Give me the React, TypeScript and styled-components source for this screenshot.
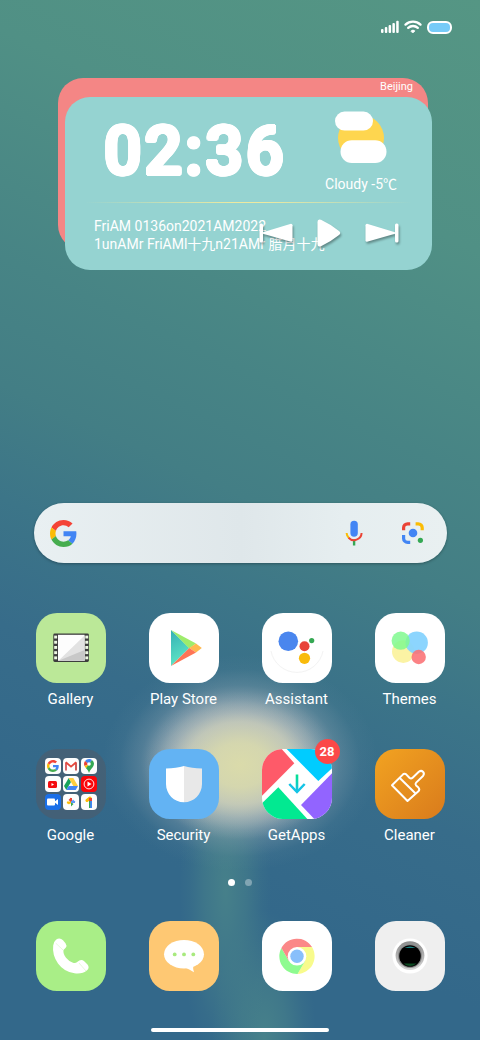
import React from 'react';
import styled, { createGlobalStyle } from 'styled-components';

const GlobalStyle = createGlobalStyle`
  *, *::before, *::after { box-sizing: border-box; }
  body {
    margin: 0;
    font-family: Roboto, "Noto Sans CJK SC", sans-serif;
    color: #fff;
  }
  button {
    border: 0;
    padding: 0;
    background: none;
    font: inherit;
    color: inherit;
    cursor: pointer;
  }
  svg { display: block; }
`;

const Screen = styled.main`
  min-height: 100vh;
  display: flex;
  flex-direction: column;
  overflow: hidden;
  background:
    radial-gradient(ellipse 96px 74px at 50% calc(100% - 275px), rgba(222, 222, 168, 0.9) 0%, rgba(222, 222, 170, 0.78) 30%, rgba(220, 220, 176, 0.48) 52%, rgba(214, 214, 190, 0.2) 72%, rgba(205, 208, 200, 0.05) 88%, rgba(200, 205, 200, 0) 100%),
    radial-gradient(ellipse 138px 108px at 50% calc(100% - 277px), rgba(196, 198, 196, 0.9) 0%, rgba(194, 197, 197, 0.85) 38%, rgba(182, 190, 194, 0.6) 55%, rgba(160, 178, 186, 0.26) 72%, rgba(130, 162, 174, 0.07) 87%, rgba(110, 150, 160, 0) 100%),
    radial-gradient(ellipse 46px 190px at 47% calc(100% - 150px), rgba(78, 138, 138, 0.7) 0%, rgba(78, 138, 138, 0.42) 45%, rgba(78, 138, 138, 0.12) 78%, rgba(78, 138, 138, 0) 100%),
    radial-gradient(ellipse 52px 130px at 55% 100%, rgba(78, 138, 138, 0.75) 0%, rgba(78, 138, 138, 0.46) 45%, rgba(78, 138, 138, 0.14) 78%, rgba(78, 138, 138, 0) 100%),
    linear-gradient(205deg, #559684 0%, #509085 20%, #478485 38%, #437e85 48%, #3c7588 57%, #376c8a 67%, #33688a 80%, #33688a 100%);
`;

const StatusBar = styled.header`
  display: flex;
  justify-content: flex-end;
  align-items: center;
  gap: 5px;
  padding: 20px 28px 0;
  height: 34px;
`;

const Battery = styled.span`
  width: 25px;
  height: 13px;
  border: 2px solid #fff;
  border-radius: 6px;
  background: #76cbf8;
`;

const Widget = styled.section`
  display: grid;
  margin: 44px 48px 32px 58px;
`;

const BackCard = styled.div`
  grid-area: 1 / 1;
  margin: 0 4px 20px 0;
  padding: 0 15px;
  border-radius: 25px;
  background: #f48685;
  font-size: 11px;
  line-height: 17px;
  text-align: right;
`;

const FrontCard = styled.div`
  grid-area: 1 / 1;
  margin: 19px 0 0 7px;
  border-radius: 25px;
  background: #95d3d1;
`;

const Overview = styled.div`
  display: flex;
  justify-content: space-between;
  align-items: flex-start;
  height: 105px;
  padding: 14px 35px 0 39px;
`;

const Clock = styled.time`
  display: flex;
  gap: 3px;
  font-weight: 500;
  font-size: 66px;
  line-height: 82px;
  text-shadow:
    2px 0 #fff, 2px 1px #fff, 1px 2px #fff, 0 2px #fff,
    -1px 2px #fff, -2px 1px #fff, -2px 0 #fff, -2px -1px #fff,
    -1px -2px #fff, 0 -2px #fff, 1px -2px #fff, 2px -1px #fff;
`;

const Weather = styled.div`
  display: flex;
  flex-direction: column;
  align-items: center;
  gap: 11px;
  font-size: 14px;
  line-height: 20px;
`;

const Divider = styled.hr`
  height: 1px;
  margin: 0 20px;
  border: 0;
  background: linear-gradient(90deg, transparent, #ece9a0 45%, #ece9a0 55%, transparent);
`;

const InfoRow = styled.div`
  display: grid;
  align-items: start;
  padding: 14px 33px 17px 29px;
`;

const DateText = styled.p`
  grid-area: 1 / 1;
  margin: 0;
  font-size: 14px;
  line-height: 18px;
  white-space: nowrap;
`;

const MediaControls = styled.div`
  grid-area: 1 / 1;
  justify-self: end;
  display: flex;
  align-items: center;
  gap: 24px;
  padding-top: 2px;
  filter: drop-shadow(1px 2px 1px rgba(0, 0, 0, 0.35));
`;

const BottomArea = styled.div`
  margin-top: auto;
`;

const SearchBar = styled.form`
  display: flex;
  align-items: center;
  height: 60px;
  margin: 0 33px 0 34px;
  padding: 0 22px 0 16px;
  border-radius: 30px;
  background: linear-gradient(90deg, #e9f0f2 0%, #dfe7ea 50%, #e6eef0 75%, #e9f0f1 100%);
  box-shadow: 0 1px 3px rgba(0, 0, 0, 0.3);
`;

const SearchInput = styled.input`
  flex: 1;
  min-width: 0;
  height: 40px;
  margin: 0 12px;
  border: 0;
  outline: 0;
  background: transparent;
  font-family: inherit;
  font-size: 16px;
  color: #333;
`;

const SearchActions = styled.div`
  display: flex;
  align-items: center;
  gap: 37px;
`;

const AppGrid = styled.nav`
  display: grid;
  grid-template-columns: repeat(4, 1fr);
  row-gap: 40px;
  margin: 50px 14px 0;
`;

const AppButton = styled.button`
  display: flex;
  flex-direction: column;
  align-items: center;
  gap: 6px;
  font-size: 15px;
  line-height: 20px;
`;

const Tile = styled.span<{ $bg: string }>`
  position: relative;
  display: grid;
  place-items: center;
  width: 70px;
  height: 70px;
  border-radius: 21px;
  background: ${(p) => p.$bg};
`;

const Badge = styled.span`
  position: absolute;
  top: -10px;
  right: -8px;
  width: 25px;
  height: 25px;
  border-radius: 50%;
  background: #fb4848;
  font-size: 13px;
  font-weight: 700;
  line-height: 25px;
  text-align: center;
`;

const FolderGrid = styled.span`
  display: grid;
  grid-template-columns: repeat(3, 16px);
  gap: 2px;
`;

const MiniTile = styled.span<{ $bg?: string }>`
  display: grid;
  place-items: center;
  height: 16px;
  border-radius: 4px;
  background: ${(p) => p.$bg ?? '#fdfdfd'};
`;

const Pager = styled.div`
  display: flex;
  justify-content: center;
  gap: 10px;
  margin-top: 34px;
`;

const Dot = styled.span<{ $active?: boolean }>`
  width: 7px;
  height: 7px;
  border-radius: 50%;
  background: ${(p) => (p.$active ? '#fff' : 'rgba(255, 255, 255, 0.35)')};
`;

const Dock = styled.nav`
  display: grid;
  grid-template-columns: repeat(4, 1fr);
  margin: 35px 14px 0;
`;

const HomeBar = styled.div`
  width: 37%;
  height: 4px;
  margin: 37px auto 8px;
  border-radius: 2px;
  background: #fff;
`;

const GoogleG = ({ size }: { size: number }) => (
  <svg width={size} height={size} viewBox="0 0 48 48" aria-hidden="true">
    <path fill="#f44336" d="M24 9.5c3.54 0 6.71 1.22 9.21 3.6l6.85-6.85C35.9 2.38 30.47 0 24 0 14.62 0 6.51 5.38 2.56 13.22l7.98 6.19C12.43 13.72 17.74 9.5 24 9.5z" />
    <path fill="#4285f4" d="M46.98 24.55c0-1.57-.15-3.09-.38-4.55H24v9.02h12.94c-.58 2.96-2.26 5.48-4.78 7.18l7.73 6c4.51-4.18 7.09-10.36 7.09-17.65z" />
    <path fill="#fbbc05" d="M10.53 28.59c-.48-1.45-.76-2.99-.76-4.59s.27-3.14.76-4.59l-7.98-6.19C.92 16.46 0 20.12 0 24c0 3.88.92 7.54 2.56 10.78l7.97-6.19z" />
    <path fill="#46ad4f" d="M24 48c6.48 0 11.93-2.13 15.89-5.81l-7.73-6c-2.15 1.45-4.92 2.3-8.16 2.3-6.26 0-11.57-4.22-13.47-9.91l-7.98 6.19C6.51 42.62 14.62 48 24 48z" />
  </svg>
);

const Drawing = ({ children }: { children: React.ReactNode }) => (
  <svg width="70" height="70" viewBox="0 0 70 70" aria-hidden="true">
    {children}
  </svg>
);

const GalleryIcon = () => (
  <Drawing>
    <rect x="17.3" y="20.6" width="35.6" height="28.4" rx="1.4" fill="#3d3d3d" />
    <rect x="22" y="21.8" width="26.6" height="26" fill="#fdfdfd" />
    <path d="M48.6 22.6V47.8H22.4z" fill="#e2e2e2" />
    <path d="M48.6 37V47.8H22.4z" fill="#c8c8c8" />
    {[22.6, 27.8, 33, 38.2, 43.4].map((y) => (
      <React.Fragment key={y}>
        <rect x="18.2" y={y} width="2.9" height="2.9" fill="#eef8e4" />
        <rect x="49.3" y={y} width="2.9" height="2.9" fill="#eef8e4" />
      </React.Fragment>
    ))}
  </Drawing>
);

const PlayStoreIcon = () => (
  <Drawing>
    <defs>
      <linearGradient id="playTeal" x1="0" y1="0" x2="0.3" y2="1">
        <stop offset="0" stopColor="#35b0b4" />
        <stop offset="1" stopColor="#5ee6c6" />
      </linearGradient>
    </defs>
    <path d="M22 17v36l18.3-18z" fill="url(#playTeal)" />
    <path d="M22 17l25 13.5-6.7 5z" fill="#9eec6c" />
    <path d="M47 30.5l5.8 4.6-5.8 4.4-6.7-4.5z" fill="#ffb950" />
    <path d="M22 53l25-13.5-6.7-4.5z" fill="#ff7556" />
  </Drawing>
);

const AssistantIcon = () => (
  <Drawing>
    <path d="M9 38a26.5 26.5 0 0 0 52 0" fill="none" stroke="#f3f3f3" strokeWidth="1" />
    <circle cx="26.3" cy="28.3" r="9.8" fill="#4a86ee" />
    <circle cx="42.5" cy="33.3" r="5" fill="#e8453a" />
    <circle cx="49.7" cy="27.6" r="2.6" fill="#35a853" />
    <circle cx="42.5" cy="45.3" r="5.6" fill="#f9bb0b" />
  </Drawing>
);

const ThemesIcon = () => (
  <Drawing>
    <circle cx="28.3" cy="38.6" r="11.3" fill="#fbf3a4" />
    <circle cx="41.7" cy="29.7" r="11.2" fill="#86d3fe" fillOpacity="0.95" />
    <circle cx="25.7" cy="27.7" r="9.1" fill="#80f98f" fillOpacity="0.85" />
    <circle cx="43.7" cy="44" r="7.2" fill="#fb7174" fillOpacity="0.88" />
  </Drawing>
);

const SecurityIcon = () => (
  <Drawing>
    <path d="M35 17c-5 1.5-11 2.3-18 2.4V35c0 10 8 18.3 18 18.3z" fill="#fff" />
    <path d="M35 17c5 1.5 11 2.3 18 2.4V35c0 10-8 18.3-18 18.3z" fill="#e8e8e8" />
  </Drawing>
);

const GetAppsIcon = () => (
  <Drawing>
    <defs>
      <clipPath id="getAppsClip"><rect width="70" height="70" rx="21" /></clipPath>
      <linearGradient id="getAppsArrow" x1="0" y1="0" x2="0" y2="1">
        <stop offset="0" stopColor="#06e28e" />
        <stop offset="1" stopColor="#12c2e8" />
      </linearGradient>
    </defs>
    <g clipPath="url(#getAppsClip)">
      <path d="M0 0h19.7l12.6 14.3L0 46.7z" fill="#fe5a69" />
      <path d="M24.7 0H70v19.3L56.3 32z" fill="#00ccff" />
      <path d="M70 24.3L39 56l13.3 14H70z" fill="#9264ff" />
      <path d="M16.3 38.3L45.3 70H0V54.3z" fill="#02e991" />
      <path d="M33.7 25.5h2.6v17h-2.6z" fill="url(#getAppsArrow)" />
      <path d="M27.3 35l7.7 8 7.7-8" fill="none" stroke="#14c4e6" strokeWidth="2.5" />
    </g>
  </Drawing>
);

const CleanerIcon = () => (
  <Drawing>
    <g fill="none" stroke="#fff" strokeWidth="2" strokeLinejoin="round">
      <path d="M17 36.3L27.8 25.6q1.8-1.6 3.6 0l3 3.2q1.6 1.5 3.2 0l6.2-6q2.4-1.9 4.2 0t0 4.2l-6.9 6.6q-1.3 1.5 0 3l2.3 2q1.7 1.8 0 3.6L32.5 52z" />
      <path d="M24.5 28.8L40.3 44.3" />
    </g>
  </Drawing>
);

const PhoneIcon = () => (
  <Drawing>
    <path d="M20 18.7q3.8-2.8 7 .6l2.5 2.9q1.8 2.4.2 4.5l-2.2 2.3q-.6 3.8 2.5 7.8 3 3.8 7 5 2.6.7 4.5-1.1 3.5-3.2 7-.3l3 3q2.4 3.2-.4 5.8-4.6 4-12.6 3-10.5-1.5-16.5-9.8Q16 34 17.2 24.5q.5-4 2.8-5.8z" fill="#fff" />
    <path d="M19.800 22.200l7.400 7M43 42l7 8" stroke="#a9ec88" strokeWidth="0.300" />
  </Drawing>
);

const MessagesIcon = () => (
  <Drawing>
    <ellipse cx="35" cy="33.2" rx="20" ry="14.3" fill="#fff" />
    <path d="M36 46.5q4 1.500 9 4.700-1.200-3.500-.8-7z" fill="#fff" />
    {[25.7, 35, 44.3].map((x) => (
      <circle key={x} cx={x} cy="33.4" r="1.9" fill="#a8ea7e" />
    ))}
  </Drawing>
);

const ChromeIcon = () => (
  <Drawing>
    <g transform="translate(35 35.3)">
      <path d="M0-9.3H15A17.7 17.7 0 0 1 .55 17.65L8.05 4.65z" fill="#f8fb8c" />
      <path d="M8.05 4.65L.55 17.65A17.7 17.7 0 0 1-15.6-8.35L-8.05 4.65z" fill="#8efb90" />
      <path d="M-8.05 4.65L-15.6-8.35A17.7 17.7 0 0 1 15-9.3H0z" fill="#fb8888" />
      <circle r="9.3" fill="#fff" />
      <circle r="6.7" fill="#88bffb" />
    </g>
  </Drawing>
);

const CameraIcon = () => (
  <Drawing>
    <defs>
      <linearGradient id="lensRing" x1="0" y1="0" x2="0" y2="1">
        <stop offset="0" stopColor="#8c8c8c" />
        <stop offset="1" stopColor="#d6d6d6" />
      </linearGradient>
    </defs>
    <circle cx="35" cy="35" r="17.6" fill="#fff" />
    <circle cx="35" cy="34.6" r="14.4" fill="url(#lensRing)" />
    <circle cx="35" cy="35" r="12" fill="#8a8a8a" />
    <circle cx="35" cy="35" r="10.8" fill="#000" />
    <path d="M29.5 27q5.5-3 11 0z" fill="#167f7f" />
    <path d="M28.5 42.5q6.5 5 13 0z" fill="#0c4a22" />
  </Drawing>
);

const GoogleFolder = () => (
  <FolderGrid>
    <MiniTile><GoogleG size={12} /></MiniTile>
    <MiniTile>
      <svg width="12" height="10" viewBox="0 0 12 10" fill="none" strokeWidth="1.8">
        <path d="M1 9.5V1.5" stroke="#d8555a" />
        <path d="M11 9.5V1.5" stroke="#c94a48" />
        <path d="M.8 1.2L6 5.6l5.2-4.4" stroke="#e5463b" />
      </svg>
    </MiniTile>
    <MiniTile>
      <svg width="10" height="14" viewBox="0 0 10 14">
        <path d="M5 0a5 5 0 0 0-4 2l4 3.4L8 .9A5 5 0 0 0 5 0z" fill="#4285f4" />
        <path d="M1 2a5 5 0 0 0-.5 5L5 5.2z" fill="#ea4335" />
        <path d="M.5 7L2 9.2 9 2 5 5.2z" fill="#fbbc04" />
        <path d="M8 .9a5 5 0 0 1 1.4 6C8.5 9 6 10.5 5 14c-.6-2.3-1.7-3.5-3-4.8z" fill="#34a853" />
        <circle cx="5" cy="5" r="1.8" fill="#fff" />
      </svg>
    </MiniTile>
    <MiniTile>
      <svg width="9" height="7" viewBox="0 0 9 7">
        <rect width="9" height="7" rx="1.5" fill="#f40c10" />
        <path d="M3.5 2v3L6 3.5z" fill="#fff" />
      </svg>
    </MiniTile>
    <MiniTile>
      <svg width="14" height="12" viewBox="0 0 14 12">
        <path d="M4.7 0L0 8l2.3 4L7 4z" fill="#17a45c" />
        <path d="M4.7 0h4.6L14 8H9.3z" fill="#ffcf3f" />
        <path d="M4.6 8H14l-2.3 4H2.3z" fill="#4386f5" />
      </svg>
    </MiniTile>
    <MiniTile $bg="#fb0509">
      <svg width="12" height="12" viewBox="0 0 12 12">
        <circle cx="6" cy="6" r="4.9" fill="none" stroke="#fff" strokeWidth="0.9" />
        <path d="M4.5 3.5v5L8.5 6z" fill="#fff" />
      </svg>
    </MiniTile>
    <MiniTile $bg="#1a6fe8">
      <svg width="11" height="8" viewBox="0 0 11 8">
        <rect y="0.5" width="8" height="7" rx="1" fill="#fff" />
        <path d="M7 4l4-3v6z" fill="#fff" />
      </svg>
    </MiniTile>
    <MiniTile>
      <svg width="10" height="10" viewBox="0 0 10 10">
        <path d="M5 .5V5L2.5 3z" fill="#ea4335" />
        <path d="M9.5 5H5l2-2.5z" fill="#5f97f6" />
        <path d="M5 9.5V5l2.500 2z" fill="#34a853" />
        <path d="M.5 5H5L3 7.5z" fill="#fbbc04" />
        <path d="M4 1h2v4H4z" fill="#ea4335" />
        <path d="M1 4.5h4v2H1z" fill="#fbbc04" />
        <path d="M5 4h4v2H5z" fill="#5f97f6" />
      </svg>
    </MiniTile>
    <MiniTile>
      <svg width="8" height="12" viewBox="0 0 8 12">
        <path d="M2 4.5L5 2" stroke="#fbbc04" strokeWidth="3" strokeLinecap="round" />
        <path d="M4 2h3v5H4z" fill="#ea4335" />
        <path d="M4 5h3v7H4z" fill="#4285f4" />
        <path d="M4 5h1.200v7H4z" fill="#34a853" />
      </svg>
    </MiniTile>
  </FolderGrid>
);

type App = { name: string; bg: string; icon: React.ReactNode; badge?: number };

const apps: App[] = [
  { name: 'Gallery', bg: '#bbe898', icon: <GalleryIcon /> },
  { name: 'Play Store', bg: '#fff', icon: <PlayStoreIcon /> },
  { name: 'Assistant', bg: '#fff', icon: <AssistantIcon /> },
  { name: 'Themes', bg: '#fff', icon: <ThemesIcon /> },
  { name: 'Google', bg: 'rgba(78, 92, 106, 0.6)', icon: <GoogleFolder /> },
  { name: 'Security', bg: '#63b3f3', icon: <SecurityIcon /> },
  { name: 'GetApps', bg: '#fff', icon: <GetAppsIcon />, badge: 28 },
  { name: 'Cleaner', bg: 'linear-gradient(135deg, #f2a321, #d97b1c)', icon: <CleanerIcon /> },
];

const dockApps: App[] = [
  { name: 'Phone', bg: '#a9ee87', icon: <PhoneIcon /> },
  { name: 'Messages', bg: '#fec873', icon: <MessagesIcon /> },
  { name: 'Chrome', bg: '#fff', icon: <ChromeIcon /> },
  { name: 'Camera', bg: '#efefef', icon: <CameraIcon /> },
];

export default function App() {
  return (
    <>
      <GlobalStyle />
      <Screen>
        <StatusBar>
          <svg width="18" height="14" viewBox="0 0 18 14" fill="#fff" aria-hidden="true">
            <rect x="0" y="9" width="2.5" height="4" rx="1" />
            <rect x="3.8" y="7" width="2.5" height="6" rx="1" />
            <rect x="7.6" y="5" width="2.5" height="8" rx="1" />
            <rect x="11.4" y="3" width="2.5" height="10" rx="1" />
            <rect x="15.2" y="0.8" width="2.5" height="12.2" rx="1" />
          </svg>
          <svg width="18" height="14" viewBox="0 0 18 14" fill="none" stroke="#fff" strokeWidth="2.3" strokeLinecap="round" aria-hidden="true">
            <path d="M1.5 4.600a11 11 0 0 1 15 0" />
            <path d="M4.200 7.900a7 7 0 0 1 9.600 0" />
            <path d="M7.200 10.900a2.600 2.600 0 0 1 3.600 0L9 12.700z" fill="#fff" strokeWidth="1" strokeLinejoin="round" />
          </svg>
          <Battery />
        </StatusBar>

        <Widget>
          <BackCard>Beijing</BackCard>
          <FrontCard>
            <Overview>
              <Clock dateTime="02:36">
                <span>0</span>
                <span>2</span>
                <span>:</span>
                <span>3</span>
                <span>6</span>
              </Clock>
              <Weather>
                <svg width="52" height="52" viewBox="0 0 52 52" aria-hidden="true">
                  <circle cx="26" cy="27" r="23" fill="#fed64f" />
                  <rect x="0" y="0.6" width="38" height="19" rx="9.5" fill="#fff" />
                  <rect x="5.5" y="29.3" width="46" height="22.7" rx="11.3" fill="#fff" />
                </svg>
                <span>Cloudy -5℃</span>
              </Weather>
            </Overview>
            <Divider />
            <InfoRow>
              <DateText>
                FriAM 0136on2021AM2022
                <br />
                1unAMr FriAMl十九n21AMr 腊月十九
              </DateText>
              <MediaControls>
                <button type="button" aria-label="Previous">
                  <svg width="34" height="20" viewBox="0 0 34 20" fill="#fff">
                    <rect x="0.5" y="0.5" width="3.5" height="19" rx="1.5" />
                    <path d="M4 9.3L32 .8q1.5 0 1.5 1.5v15q0 1.5-1.5 1.5L4 10.7z" />
                  </svg>
                </button>
                <button type="button" aria-label="Play">
                  <svg width="24" height="28" viewBox="0 0 24 28" fill="#fff">
                    <path d="M.5 3Q.5-.5 4 .8 14 5.5 22 12q2.5 2 0 4Q14 22.5 4 27.2.5 28.5.5 25z" />
                  </svg>
                </button>
                <button type="button" aria-label="Next">
                  <svg width="34" height="20" viewBox="0 0 34 20" fill="#fff">
                    <rect x="30" y="0.5" width="3.5" height="19" rx="1.5" />
                    <path d="M30 9.3L2 .8Q.5.8.5 2.3v15q0 1.5 1.5 1.5L30 10.7z" />
                  </svg>
                </button>
              </MediaControls>
            </InfoRow>
          </FrontCard>
        </Widget>

        <BottomArea>
          <SearchBar role="search" onSubmit={(e) => e.preventDefault()}>
            <GoogleG size={27} />
            <SearchInput type="text" aria-label="Search" />
            <SearchActions>
              <button type="button" aria-label="Voice search">
                <svg width="20" height="26" viewBox="0 0 20 26" fill="none">
                  <rect x="6.4" y="0.8" width="7.4" height="16" rx="3.7" fill="#4285f4" />
                  <path d="M8.9 19.5h2.4v6H8.9z" fill="#34a853" />
                  <path d="M2.6 13a7.5 7.5 0 0 0 2.3 5" stroke="#fbbc04" strokeWidth="2" />
                  <path d="M4.6 17.7a7.5 7.5 0 0 0 13-4.7" stroke="#ea4335" strokeWidth="2" />
                </svg>
              </button>
              <button type="button" aria-label="Lens search">
                <svg width="24" height="24" viewBox="0 0 24 24" fill="none" strokeWidth="3.2">
                  <path d="M2.6 9.2V6.8a4 4 0 0 1 4-4h2.6" stroke="#ea4335" />
                  <path d="M14.6 2.8h2.6a4 4 0 0 1 4 4v2.4" stroke="#fbbc04" />
                  <path d="M2.6 14v3.4a4 4 0 0 0 4 4h2.6" stroke="#4285f4" />
                  <circle cx="12" cy="12" r="4.3" fill="#4285f4" />
                  <circle cx="19.4" cy="19.3" r="2.6" fill="#34a853" />
                </svg>
              </button>
            </SearchActions>
          </SearchBar>

          <AppGrid aria-label="Apps">
            {apps.map((app) => (
              <AppButton type="button" key={app.name}>
                <Tile $bg={app.bg}>
                  {app.icon}
                  {app.badge && <Badge>{app.badge}</Badge>}
                </Tile>
                <span>{app.name}</span>
              </AppButton>
            ))}
          </AppGrid>

          <Pager>
            <Dot $active />
            <Dot />
          </Pager>

          <Dock aria-label="Dock">
            {dockApps.map((app) => (
              <AppButton type="button" key={app.name} aria-label={app.name}>
                <Tile $bg={app.bg}>{app.icon}</Tile>
              </AppButton>
            ))}
          </Dock>
          <HomeBar />
        </BottomArea>
      </Screen>
    </>
  );
}
